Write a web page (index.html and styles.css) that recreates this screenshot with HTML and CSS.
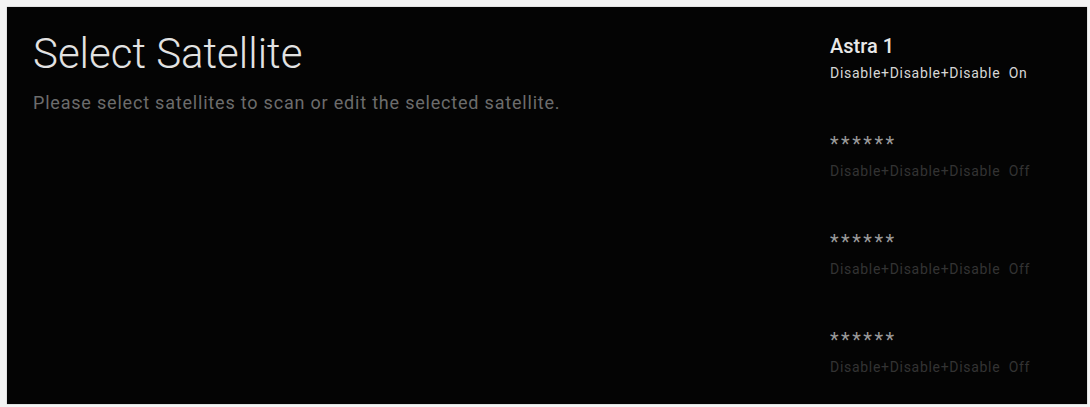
FILE: index.html
```html
<!DOCTYPE html>
<html lang="en">
<head>
<meta charset="utf-8">
<title>Select Satellite</title>
<link rel="stylesheet" href="styles.css">
</head>
<body>
<div class="screen">
  <div class="intro">
    <h1 class="title">Select Satellite</h1>
    <p class="subtitle">Please select satellites to scan or edit the selected satellite.</p>
  </div>
  <ul class="list">
    <li class="item active">
      <div class="name">Astra 1</div>
      <div class="meta">Disable+Disable+Disable&nbsp;&nbsp;On</div>
    </li>
    <li class="item">
      <div class="name stars">******</div>
      <div class="meta">Disable+Disable+Disable&nbsp;&nbsp;Off</div>
    </li>
    <li class="item">
      <div class="name stars">******</div>
      <div class="meta">Disable+Disable+Disable&nbsp;&nbsp;Off</div>
    </li>
    <li class="item">
      <div class="name stars">******</div>
      <div class="meta">Disable+Disable+Disable&nbsp;&nbsp;Off</div>
    </li>
  </ul>
</div>
</body>
</html>
```
FILE: styles.css
```css
html, body {
  margin: 0;
  padding: 0;
  background: #f4f4f4;
}
body {
  width: 1090px;
  height: 407px;
  overflow: hidden;
  font-family: Roboto, "Liberation Sans", sans-serif;
}
.screen {
  margin: 7px 3px 3px 7px;
  height: 397px;
  background: #040404;
  display: flex;
  box-shadow: 0 0 1px #888;
}
.intro {
  flex: 1;
  padding: 22px 0 0 26px;
}
.title {
  margin: 0;
  font-weight: 300;
  font-size: 42px;
  line-height: 50px;
  color: #e2e2e2;
}
.subtitle {
  margin: 12px 0 0;
  font-size: 18px;
  line-height: 24px;
  letter-spacing: 0.8px;
  color: #6c6c6c;
}
.list {
  list-style: none;
  margin: 0;
  padding: 27px 44px 0 0;
  width: 214px;
  display: flex;
  flex-direction: column;
  gap: 49px;
}
.item {
  padding-left: 1px;
}
.name {
  font-size: 20px;
  font-weight: 500;
  line-height: 24px;
  color: #e8e8e8;
}
.stars {
  font-weight: 400;
  letter-spacing: 2.5px;
  color: #9a9a9a;
}
.meta {
  margin-top: 5px;
  font-size: 14px;
  line-height: 20px;
  letter-spacing: 0.7px;
  color: #333333;
}
.active .meta {
  color: #d6d6d6;
}
```
